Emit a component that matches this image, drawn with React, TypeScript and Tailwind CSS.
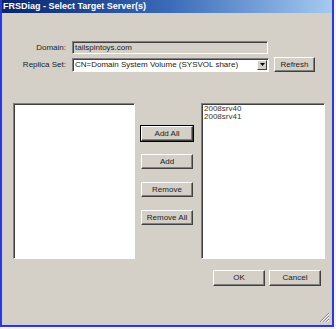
import React from 'react';

const font = { fontFamily: '"Liberation Sans", Arial, sans-serif' };

const Btn = ({ label, w, h = 'h-[15px]', def = false }: { label: string; w: string; h?: string; def?: boolean }) => (
  <div className={`${w} ${h} ${def ? 'outline outline-1 outline-black' : ''} flex`}>
    <div className="flex-1 flex items-center justify-center border border-t-white border-l-white border-r-[#404040] border-b-[#404040] shadow-[inset_-1px_-1px_0_#808080] bg-[#d4d0c8] text-[8px] text-[#222]">
      {label}
    </div>
  </div>
);

const sunken = 'border border-t-[#808080] border-l-[#808080] border-r-white border-b-white shadow-[inset_1px_1px_0_#404040]';

export default function App() {
  return (
    <div className="w-[336px] h-[329px] bg-[#f4f4f8]" style={font}>
      <div className="w-[334px] h-[327px] flex flex-col border-x-2 border-b-2 border-[#2f3acb] bg-[#d4d0c8]">
        {/* title bar */}
        <div className="h-[13px] flex items-center pl-[1px] bg-gradient-to-r from-[#0a246a] via-[#3a6ab8] to-[#a6caf0] text-white text-[9px] font-bold leading-none">
          FRSDiag - Select Target Server(s)
        </div>

        <div className="relative flex-1 flex flex-col pt-[28px] border-x border-b border-[#c9c9f0]">
          {/* domain */}
          <div className="flex items-center h-[13px] text-[8px]">
            <div className="w-[63px] text-right text-[#222]">Domain:</div>
            <div className={`ml-[6px] w-[196px] h-[13px] flex items-center pl-[2px] bg-[#d4d0c8] text-[#222] ${sunken}`}>
              tailspintoys.com
            </div>
          </div>

          {/* replica set */}
          <div className="flex items-center h-[15px] mt-[3px] text-[8px]">
            <div className="w-[63px] text-right text-[#222]">Replica Set:</div>
            <div className={`ml-[6px] w-[197px] h-[14px] flex items-center bg-white ${sunken}`}>
              <div className="flex-1 pl-[2px] text-[#222] whitespace-nowrap">CN=Domain System Volume (SYSVOL share)</div>
              <div className="w-[10px] h-[10px] mr-[1px] flex items-center justify-center border border-t-white border-l-white border-r-[#404040] border-b-[#404040] bg-[#d4d0c8]">
                <svg width="5" height="3" viewBox="0 0 5 3"><path d="M0 0h5L2.5 3z" fill="#000" /></svg>
              </div>
            </div>
            <div className="ml-[5px]">
              <Btn label="Refresh" w="w-[41px]" />
            </div>
          </div>

          {/* lists */}
          <div className="flex mt-[31px] h-[156px] pl-[10px]">
            <div className={`w-[122px] h-full bg-white ${sunken}`} />
            <div className="w-[52px] ml-[6px] flex flex-col pt-[23px] gap-[13px]">
              <Btn label="Add All" w="w-[52px]" def />
              <Btn label="Add" w="w-[52px]" />
              <Btn label="Remove" w="w-[52px]" />
              <Btn label="Remove All" w="w-[52px]" />
            </div>
            <div className={`w-[124px] h-full ml-[8px] bg-white pl-[2px] pt-[1px] text-[8px] leading-[8px] text-[#333] ${sunken}`}>
              <div>2008srv40</div>
              <div>2008srv41</div>
            </div>
          </div>

          {/* ok / cancel */}
          <div className="flex mt-[11px] pl-[210px] gap-[4px]">
            <Btn label="OK" w="w-[52px]" h="h-[16px]" />
            <Btn label="Cancel" w="w-[52px]" h="h-[16px]" />
          </div>

          {/* resize grip */}
          <svg className="absolute right-[1px] bottom-[1px]" width="11" height="11" viewBox="0 0 11 11">
            <path d="M10 1L1 10M10 4L4 10M10 7L7 10" stroke="#808080" strokeWidth="1" />
            <path d="M10 2L2 10M10 5L5 10M10 8L8 10" stroke="#ffffff" strokeWidth="1" />
          </svg>
        </div>
      </div>
    </div>
  );
}
